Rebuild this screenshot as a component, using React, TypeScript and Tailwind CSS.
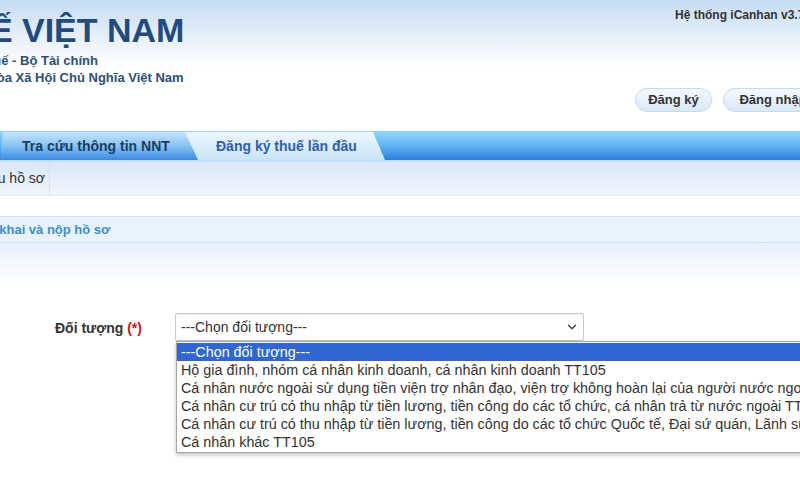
import { ChevronDown } from 'lucide-react';

const options = [
  '---Chọn đối tượng---',
  'Hộ gia đình, nhóm cá nhân kinh doanh, cá nhân kinh doanh TT105',
  'Cá nhân nước ngoài sử dụng tiền viện trợ nhân đạo, viện trợ không hoàn lại của người nước ngoài tại Việt Nam TT105',
  'Cá nhân cư trú có thu nhập từ tiền lương, tiền công do các tổ chức, cá nhân trả từ nước ngoài TT105',
  'Cá nhân cư trú có thu nhập từ tiền lương, tiền công do các tổ chức Quốc tế, Đại sứ quán, Lãnh sự quán tại Việt Nam chi trả TT105',
  'Cá nhân khác TT105',
];

export default function App() {
  return (
    <div
      className="w-[800px] h-[500px] overflow-hidden bg-white text-[#333]"
      style={{ fontFamily: '"Liberation Sans", Arial, sans-serif' }}
    >
      {/* header */}
      <header className="h-[131px] flex justify-between bg-gradient-to-b from-[#c6dcf3] via-white via-[50%] to-white">
        <div className="pt-[10px] whitespace-nowrap">
          <div className="-ml-[80px] text-[34px] leading-[40px] font-bold text-[#1f4b80]">THUẾ VIỆT NAM</div>
          <div className="text-[13px] leading-[17px] font-bold text-[#2c4f7a] mt-[2px]">
            <div className="-ml-[84px]">Tổng cục Thuế - Bộ Tài chính</div>
            <div className="-ml-[48px]">Cộng hòa Xã Hội Chủ Nghĩa Việt Nam</div>
          </div>
        </div>
        <div className="flex flex-col items-start w-[165px] shrink-0 pt-[8px] whitespace-nowrap">
          <div className="ml-[40px] text-[12px] leading-[14px] font-bold text-[#333]">Hệ thống iCanhan v3.7.2</div>
          <div className="flex gap-[11px] mt-[66px]">
            <button className="h-[24px] w-[77px] shrink-0 rounded-full border border-[#c3daf0] bg-gradient-to-b from-[#f5f9fe] to-[#dae9f8] text-[13px] font-bold text-[#333]">
              Đăng ký
            </button>
            <button className="h-[24px] w-[100px] shrink-0 rounded-full border border-[#c3daf0] bg-gradient-to-b from-[#f5f9fe] to-[#dae9f8] text-[13px] font-bold text-[#333]">
              Đăng nhập
            </button>
          </div>
        </div>
      </header>

      {/* tab bar */}
      <nav className="h-[31px] flex border-t border-[#9fd0ef] border-b-2 border-b-[#bfe0f8] bg-gradient-to-b from-[#8fd6f7] via-[#5fb2ee] to-[#2b7fe0]">
        <div className="w-[198px] shrink-0 flex items-center pl-[22px] text-[14px] font-bold text-[#1b3c5e] bg-gradient-to-b from-[#c6e6fb] via-[#86c3f1] to-[#3a8ae3] [clip-path:polygon(3px_0,185px_0,198px_100%,0_100%)]">
          Tra cứu thông tin NNT
        </div>
        <div className="w-[200px] -ml-[13px] shrink-0 flex items-center pl-[31px] text-[14px] font-bold text-[#2d5db6] bg-gradient-to-b from-[#eef7fd] to-[#c9e4f8] [clip-path:polygon(0_0,188px_0,200px_100%,13px_100%)]">
          Đăng ký thuế lần đầu
        </div>
      </nav>

      {/* sub menu */}
      <div className="h-[34px] flex border-b border-[#e4edf7] bg-gradient-to-b from-[#dbe8f8] to-[#eff5fd]">
        <div className="w-[50px] flex items-center justify-end pr-[4px] border-r border-[#d4e2f1] text-[14px] whitespace-nowrap">
          <span>Tra cứu hồ sơ</span>
        </div>
      </div>

      <div className="h-[20px]" />

      {/* section title */}
      <div className="h-[27px] flex items-center border-y border-[#cde0f4] bg-[#e9f3fd] text-[13px] font-bold text-[#3a8ed2] whitespace-nowrap">
        <span className="-ml-[21px]">Kê khai và nộp hồ sơ</span>
      </div>
      <div className="h-[40px] bg-gradient-to-b from-[#e6f0fc] to-white" />

      {/* form */}
      <div className="pt-[30px] flex items-start">
        <div className="w-[175px] shrink-0 pl-[55px] pt-[5px] text-[14px] font-bold text-[#333]">
          Đối tượng <span className="text-[#cc1111]">(*)</span>
        </div>
        <div className="flex-1 min-w-0">
          <div className="w-[409px] h-[28px] flex items-center justify-between pl-[5px] pr-[4px] border border-[#c9c9c9] rounded-[2px] text-[14px] text-[#333] bg-white shadow-[inset_0_1px_1px_rgba(0,0,0,0.05)]">
            <span>---Chọn đối tượng---</span>
            <ChevronDown size={14} strokeWidth={2.5} className="text-[#444]" />
          </div>
          <ul className="ml-[1px] w-[640px] border border-[#a5a5a5] bg-white py-[1px] shadow-[0_2px_4px_rgba(0,0,0,0.25)] text-[14.35px] leading-[18px] whitespace-nowrap">
            {options.map((o, i) => (
              <li
                key={o}
                className={i === 0 ? 'pl-[4px] bg-[#2f66d4] text-white' : 'pl-[4px] text-[#333]'}
              >
                {o}
              </li>
            ))}
          </ul>
        </div>
      </div>
    </div>
  );
}
